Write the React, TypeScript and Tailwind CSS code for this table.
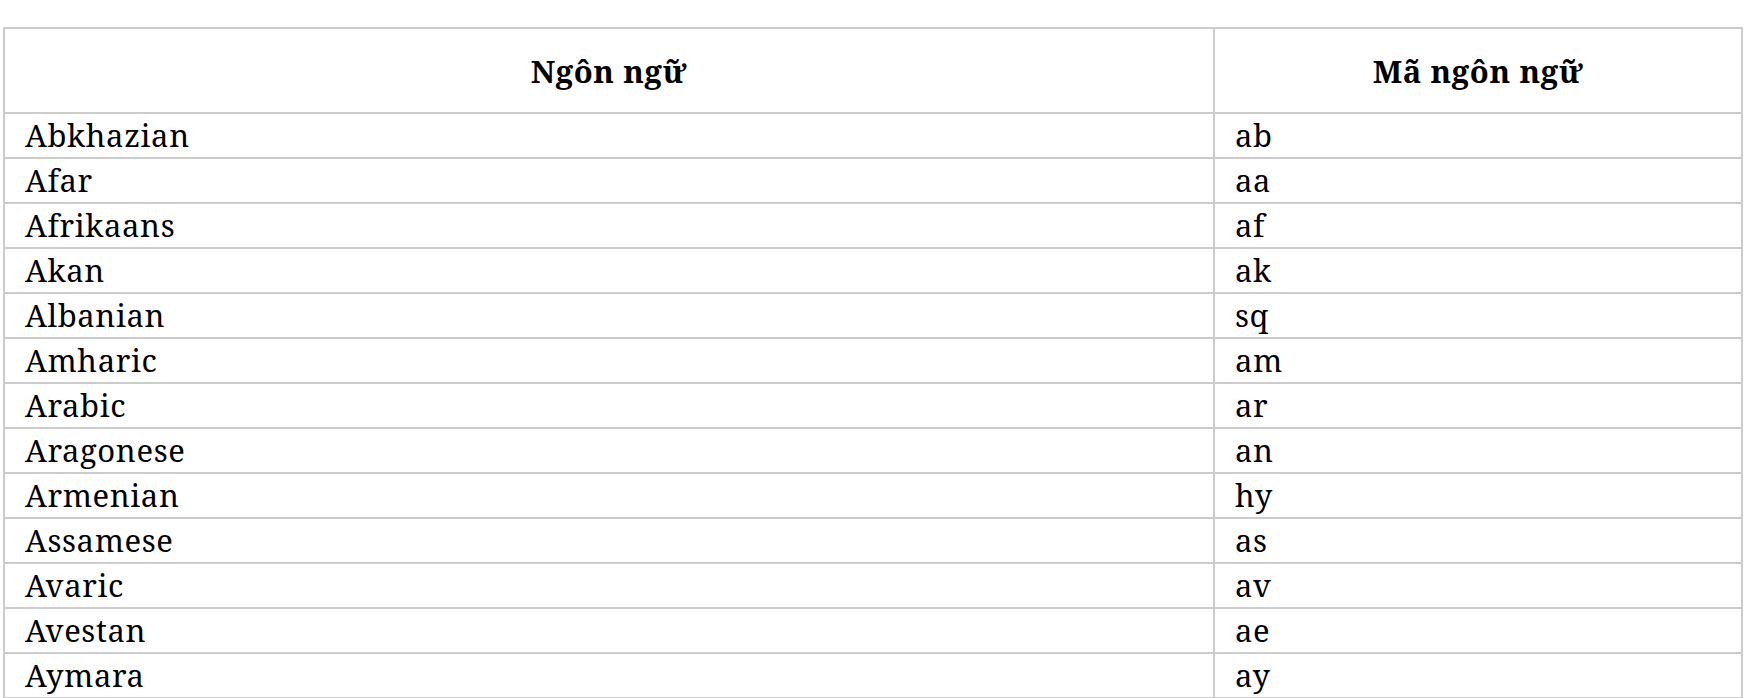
import React from "react";

const rows: [string, string][] = [
  ["Abkhazian", "ab"],
  ["Afar", "aa"],
  ["Afrikaans", "af"],
  ["Akan", "ak"],
  ["Albanian", "sq"],
  ["Amharic", "am"],
  ["Arabic", "ar"],
  ["Aragonese", "an"],
  ["Armenian", "hy"],
  ["Assamese", "as"],
  ["Avaric", "av"],
  ["Avestan", "ae"],
  ["Aymara", "ay"],
];

export default function App() {
  return (
    <div className="bg-white min-h-[698px] pt-[27px] pl-[3px] font-['Noto_Serif',serif] text-black">
      <table className="w-[1740px] table-fixed border-separate border-spacing-0 border-t-2 border-l-2 border-[#cccccc]">
        <thead>
          <tr>
            <th className="w-[1210px] h-[85px] p-0 pt-[1px] border-r-2 border-b-2 border-[#cccccc] text-[31px] leading-[82px] font-bold text-center tracking-[0.6px]">
              Ngôn ngữ
            </th>
            <th className="w-[528px] h-[85px] p-0 pt-[1px] border-r-2 border-b-2 border-[#cccccc] text-[31px] leading-[82px] font-bold text-center tracking-[0.6px]">
              Mã ngôn ngữ
            </th>
          </tr>
        </thead>
        <tbody>
          {rows.map(([name, code]) => (
            <tr key={code}>
              <td className="h-[45px] py-0 px-[20px] border-r-2 border-b-2 border-[#cccccc] text-[31px] leading-[43px] tracking-[0.6px] whitespace-nowrap">
                {name}
              </td>
              <td className="h-[45px] py-0 px-[20px] border-r-2 border-b-2 border-[#cccccc] text-[31px] leading-[43px] tracking-[0.6px] whitespace-nowrap">
                {code}
              </td>
            </tr>
          ))}
        </tbody>
      </table>
    </div>
  );
}
